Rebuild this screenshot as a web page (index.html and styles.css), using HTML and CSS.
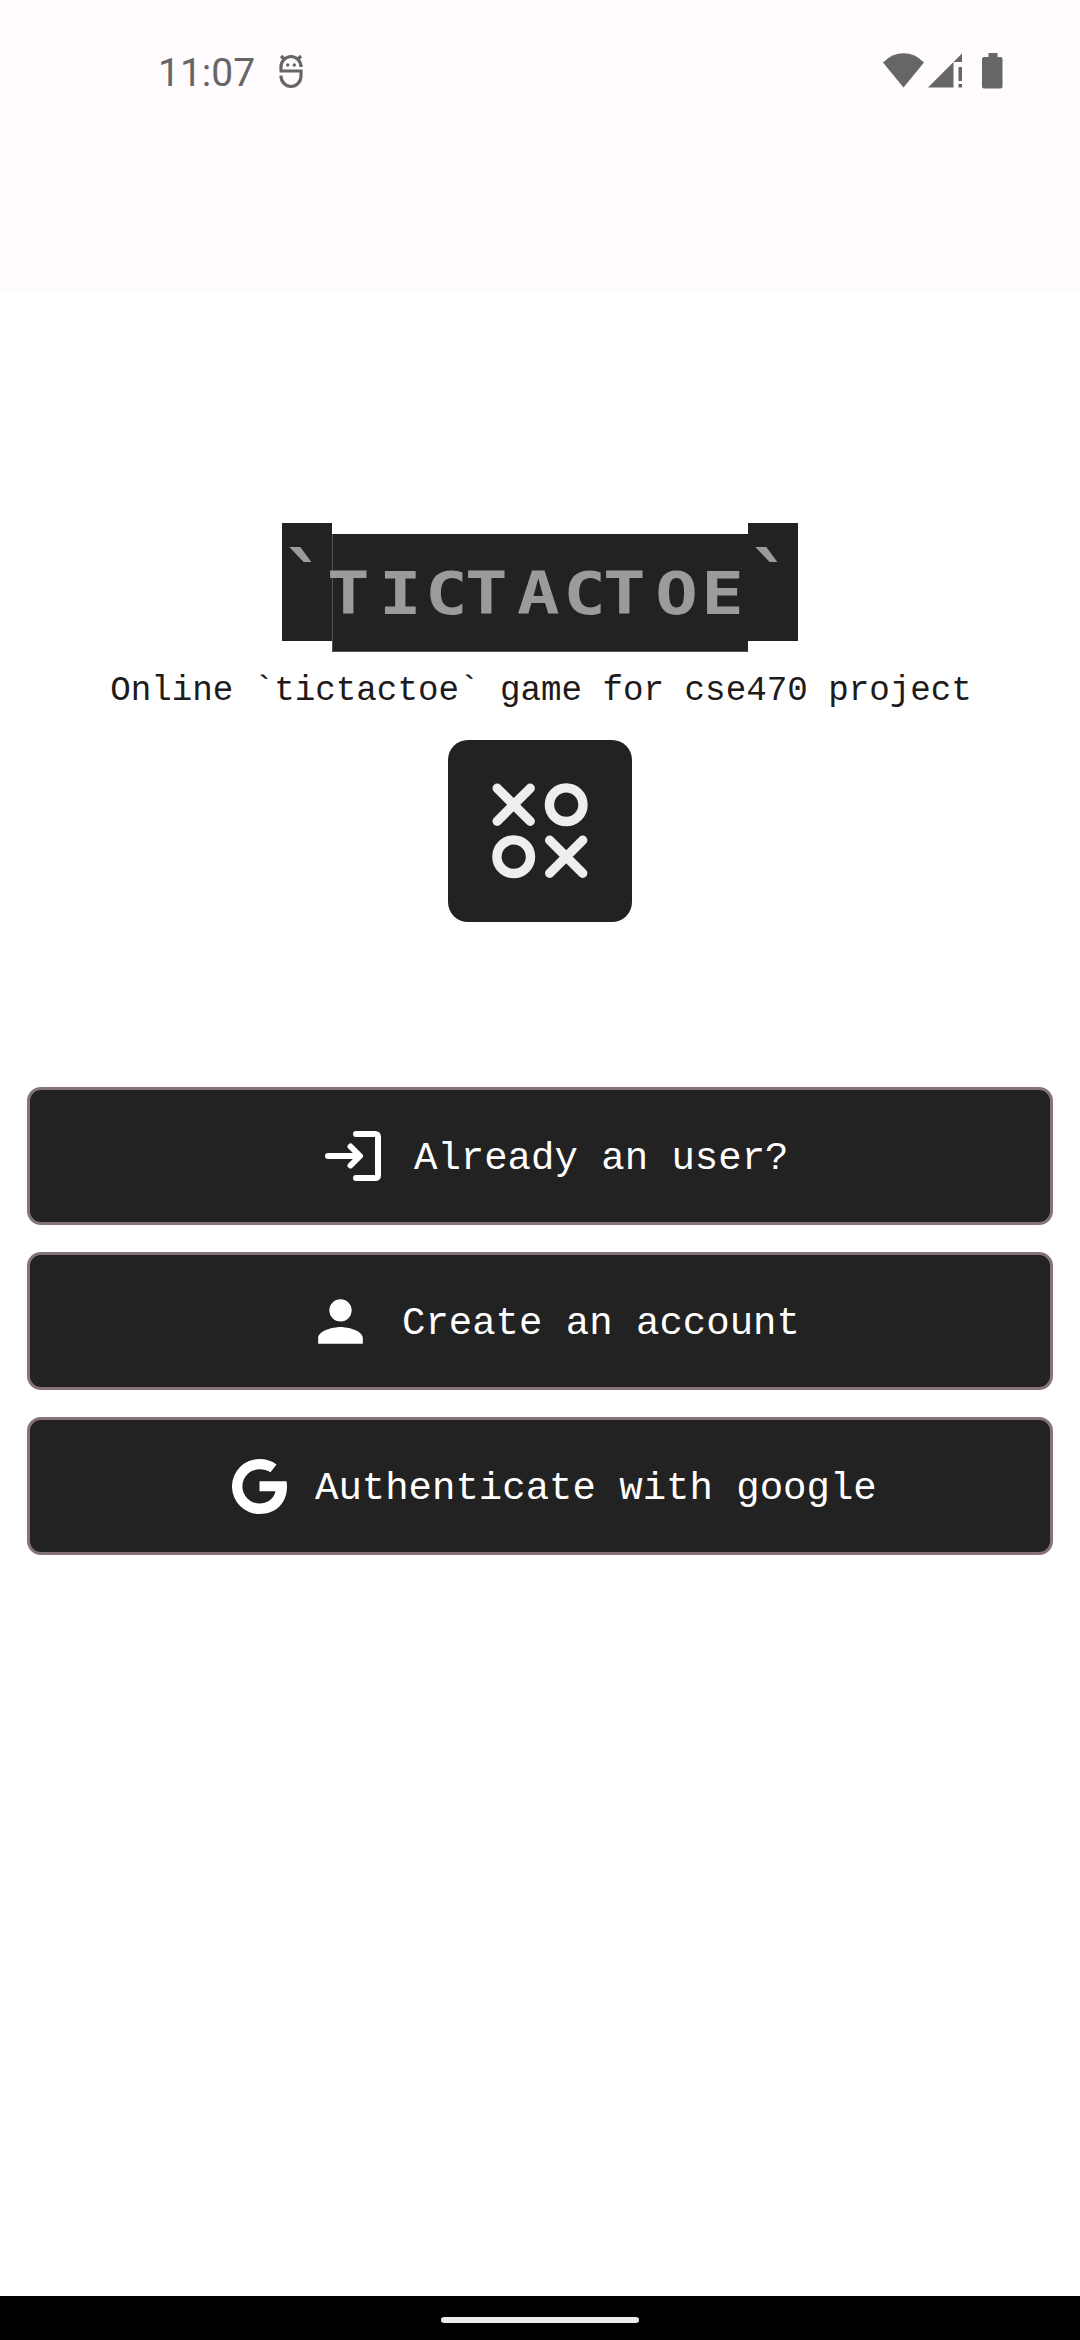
FILE: index.html
```html
<!DOCTYPE html>
<html lang="en">
<head>
<meta charset="utf-8">
<title>Tictactoe</title>
<link rel="stylesheet" href="styles.css">
</head>
<body>
<div class="screen">
  <header class="status-bar">
    <span class="time">11:07</span>
    <svg class="debug-icon" width="26" height="36" viewBox="0 0 26 36" fill="none" stroke="#666" stroke-width="3.200">
      <path d="M3 17.500V14a10 10.500 0 0 1 20 0v-.5M1.500 18H23V23a10 10.500 0 0 1-20 0v-.5M5.500 5.500 3 3M20.500 5.500 23 3M23 13v1"/>
      <g fill="#666" stroke="none"><circle cx="9.700" cy="12" r="1.700"/><circle cx="16.300" cy="12" r="1.700"/></g>
    </svg>
    <svg class="signals" width="124" height="36" viewBox="0 0 124 36" fill="#666">
      <path d="M0 9.500Q9 .3 20.500.3T41 9.500L20.500 34.500Z"/>
      <path d="M45 34.500 70.500 9V34.500ZM71 8.500 79 .5V9H71ZM75.500 14H79V28H75.500ZM75.500 31H79V34.500H75.500Z"/>
      <path d="M105.500 0h9v4h3q2 0 2 2V33.500q0 2-2 2H101q-2 0-2-2V6q0-2 2-2h4.500Z"/>
    </svg>
  </header>

  <main class="content">
    <h1 class="banner"><span class="tick">`</span><span class="name"><span class="letters"><span class="t">T</span>IC<span class="t">T</span>AC<span class="t">T</span>OE</span></span><span class="tick">`</span></h1>
    <p class="subtitle">Online `tictactoe` game for cse470 project</p>
    <div class="logo">
      <svg width="96" height="96" viewBox="0 0 96 96" fill="none" stroke="#eee" stroke-width="9.400" stroke-linecap="round">
        <path d="m5.200 5.200 33 33m0-33-33 33M57.700 57.200l33 33m0-33-33 33"/>
        <circle cx="74.200" cy="21.700" r="16.800"/><circle cx="21.700" cy="73.700" r="16.800"/>
      </svg>
    </div>

    <nav class="actions">
      <button class="action login">
        <svg width="56" height="50" viewBox="0 0 56 50" fill="none" stroke="#fff" stroke-width="6" stroke-linecap="round" stroke-linejoin="round"><path d="M31 3H50q3 0 3 3V44q0 3-3 3H31M3 25H34M25.500 15.500 35 25l-9.500 9.500"/></svg>
        <span class="label">Already an user?</span>
      </button>
      <button class="action create">
        <svg width="67" height="67" viewBox="0 0 24 24" fill="#fff"><path d="M12 12a4 4 0 1 0 0-8 4 4 0 0 0 0 8Zm0 2c-2.670 0-8 1.340-8 4v2h16v-2c0-2.660-5.330-4-8-4Z"/></svg>
        <span class="label">Create an account</span>
      </button>
      <button class="action google">
        <svg width="55" height="55" viewBox="0 0 55 55" fill="#fff"><path d="M27.500 22.300H54.500Q55 25 55 27.500C55 44 44 55 27.500 55A27.500 27.500 0 1 1 27.500 0Q37.500 0 44.500 5.500L38.500 13.200Q34 10.300 27.500 10.300A17 17 0 0 0 27.500 44.500C36 44.500 42 39.500 43.500 32.300H27.500Z"/></svg>
        <span class="label">Authenticate with google</span>
      </button>
    </nav>
  </main>

  <footer class="nav-bar"><span class="handle"></span></footer>
</div>
</body>
</html>
```
FILE: styles.css
```css
* { box-sizing: border-box; }

body { margin: 0; background: #fff; }

.screen {
  width: 1080px;
  height: 2340px;
  display: flex;
  flex-direction: column;
  overflow: hidden;
  font-family: "Liberation Mono", monospace;
}

.status-bar {
  height: 292px;
  padding: 53px 73px 0 158px;
  display: flex;
  align-items: flex-start;
  background: #fffbff;
  color: #666;
}

.time {
  width: 120px;
  font: 39px/40px Roboto, sans-serif;
}

.signals { margin-left: auto; }

.content {
  flex: 1;
  display: flex;
  flex-direction: column;
  align-items: center;
  padding-top: 231px;
}

.banner {
  height: 129px;
  margin: 0;
  display: flex;
  color: #9b9b9b;
  font: bold 58px/121px "DejaVu Sans Mono", monospace;
}

.tick {
  width: 50px;
  height: 118px;
  background: #222;
  font-size: 80px;
  line-height: 124px;
  text-align: center;
  text-indent: -3px;
}

.name {
  width: 416px;
  height: 118px;
  margin-top: 11px;
  background: #222;
  border-left: 1px solid #555;
  border-bottom: 1px solid #555;
}

.letters {
  display: inline-block;
  transform: scaleX(1.22);
  transform-origin: left;
  letter-spacing: 2.800px;
  white-space: nowrap;
}

.t {
  margin-left: -5px;
  margin-right: 5px;
}

.subtitle {
  height: 58px;
  margin: 0 0 30px;
  padding-left: 2px;
  color: #201a1b;
  font-size: 34.200px;
  line-height: 78px;
  white-space: nowrap;
}

.logo {
  width: 184px;
  height: 182px;
  padding: 43px 0 0 44px;
  border-radius: 20px;
  background: #222;
}

.logo svg { display: block; }

.actions {
  width: 1026px;
  margin-top: 165px;
  display: flex;
  flex-direction: column;
  gap: 27px;
}

.action {
  height: 138px;
  padding: 0;
  display: flex;
  align-items: center;
  border: 3px solid #857377;
  border-radius: 14px;
  background: #222;
  color: #fff;
  font: 39px/46px "Liberation Mono", monospace;
  white-space: nowrap;
}

.label { padding-top: 5px; }

.login { padding-left: 295px; gap: 33px; }
.create { padding-left: 277px; gap: 28px; }
.google { padding-left: 202px; gap: 28px; }

.nav-bar {
  height: 44px;
  padding-top: 21px;
  background: #000;
}

.handle {
  display: block;
  width: 198px;
  height: 6px;
  margin: 0 auto;
  border-radius: 3px;
  background: #ebebeb;
}
```
